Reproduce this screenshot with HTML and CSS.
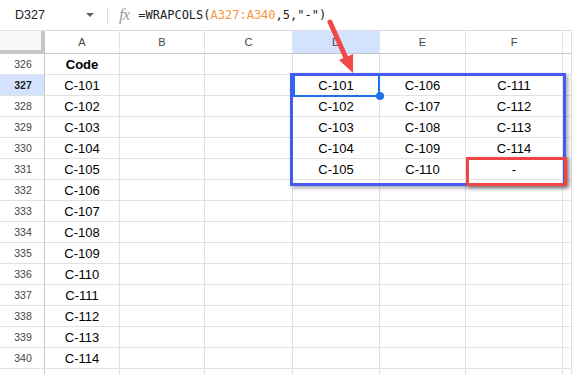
FILE: index.html
```html
<!DOCTYPE html>
<html lang="en">
<head>
    <meta charset="UTF-8">
    <title>WRAPCOLS</title>
    <link rel="stylesheet" href="styles.css">
</head>
<body>
    <div class="sheet">
        <div class="formula-bar">
            <div class="name-box">D327</div>
            <span class="caret"></span>
            <span class="divider"></span>
            <span class="fx">fx</span>
            <div class="formula">=WRAPCOLS(<span class="ref">A327:A340</span>,5,"-")</div>
        </div>

        <div class="grid" id="grid"></div>

        <!-- overlays -->
        <div class="result-box"></div>
        <div class="pad-box"></div>
        <div class="active-cell"></div>
        <div class="fill-dot"></div>
        <svg class="arrow" width="45" height="65" viewBox="0 0 45 65">
            <line x1="10" y1="8" x2="26" y2="44" stroke="#f04848" stroke-width="5" stroke-linecap="round"/>
            <polygon points="33,59 19,46 33,40" fill="#f04848"/>
        </svg>
    </div>

    <script>
        const cols = ['A', 'B', 'C', 'D', 'E', 'F', ''];
        const grid = document.getElementById('grid');

        // datos de la columna A y la salida de WRAPCOLS en D:F
        const codes = [];
        for (let i = 101; i <= 114; i++) codes.push('C-' + i);

        function cell(text, cls) {
            const c = document.createElement('div');
            c.className = 'cell ' + (cls || '');
            c.textContent = text;
            grid.appendChild(c);
        }

        cell('', 'corner');
        cols.forEach(l => cell(l, 'col-head' + (l === 'D' ? ' sel' : '')));

        for (let r = 326; r <= 341; r++) {
            cell(r <= 340 ? r : '', 'row-head' + (r === 327 ? ' sel' : ''));
            const i = r - 327;
            cell(r === 326 ? 'Code' : (codes[i] || ''), r === 326 ? 'bold' : '');
            cell('');
            cell('');
            for (let k = 0; k < 3; k++) {
                let v = '';
                if (i >= 0 && i < 5) {
                    v = codes[k * 5 + i] || '-';
                }
                cell(v);
            }
            cell('');
        }
    </script>
</body>
</html>
```

FILE: styles.css
```css
body {
    margin: 0;
    font-family: "Liberation Sans", Arial, sans-serif;
    background: #fff;
    overflow: hidden;
}

.sheet {
    position: relative;
    width: 572px;
    height: 374px;
    overflow: hidden;
}

.formula-bar {
    display: flex;
    align-items: center;
    border-bottom: 1px solid #dadce0;
    box-sizing: border-box;
    height: 31px;
}

.name-box {
    padding-left: 15px;
    width: 68px;
    font-size: 12.5px;
    color: #202124;
}

.caret {
    width: 0;
    height: 0;
    border-left: 4px solid transparent;
    border-right: 4px solid transparent;
    border-top: 4px solid #5f6368;
    margin-left: 3px;
}

.divider {
    width: 1px;
    height: 17px;
    background: #dadce0;
    margin-left: 13px;
}

.fx {
    font-family: "Liberation Serif", serif;
    font-style: italic;
    font-size: 17px;
    color: #9aa0a6;
    margin-left: 11px;
    letter-spacing: -1px;
}

.formula {
    margin-left: 9px;
    font-family: "DejaVu Sans Mono", monospace;
    font-size: 12px;
    color: #202124;
}

.ref {
    color: #f7963b;
}

.grid {
    display: grid;
    grid-template-columns: 45px 75px 85px 88px 87px 86px 97px 9px;
    grid-template-rows: 23px repeat(16, 21px);
}

.cell {
    box-sizing: border-box;
    border-right: 1px solid #e2e2e2;
    border-bottom: 1px solid #e2e2e2;
    display: flex;
    align-items: center;
    justify-content: center;
    font-size: 13px;
    color: #000;
    white-space: nowrap;
    overflow: hidden;
}

.bold {
    font-weight: bold;
}

.corner {
    background: #f8f9fa;
    border-right: 4px solid #c4c7c5;
    border-bottom: 4px solid #c4c7c5;
}

.col-head {
    font-size: 11px;
    color: #444;
    border-bottom: 1px solid #c4c7c5;
}

.row-head {
    font-size: 10.5px;
    color: #444;
    border-right: 1px solid #c4c7c5;
    padding-left: 2px;
}

.sel {
    background: #d3e3fd;
}

.row-head.sel {
    font-weight: bold;
    color: #1f1f1f;
}

.result-box {
    position: absolute;
    left: 290px;
    top: 73px;
    width: 276px;
    height: 113px;
    box-sizing: border-box;
    border: 3px solid #435bf3;
    box-shadow: 2px 2px 4px rgba(0, 0, 0, 0.35);
}

.pad-box {
    position: absolute;
    left: 466px;
    top: 157px;
    width: 101px;
    height: 29px;
    box-sizing: border-box;
    border: 3px solid #f14545;
    box-shadow: 2px 2px 4px rgba(0, 0, 0, 0.35);
}

.active-cell {
    position: absolute;
    left: 293px;
    top: 76px;
    width: 87px;
    height: 21px;
    box-sizing: border-box;
    border: 2px solid #1a73e8;
    border-top: none;
}

.fill-dot {
    position: absolute;
    left: 376px;
    top: 92px;
    width: 8px;
    height: 8px;
    border-radius: 50%;
    background: #1a73e8;
}

.arrow {
    position: absolute;
    left: 320px;
    top: 14px;
}
```
